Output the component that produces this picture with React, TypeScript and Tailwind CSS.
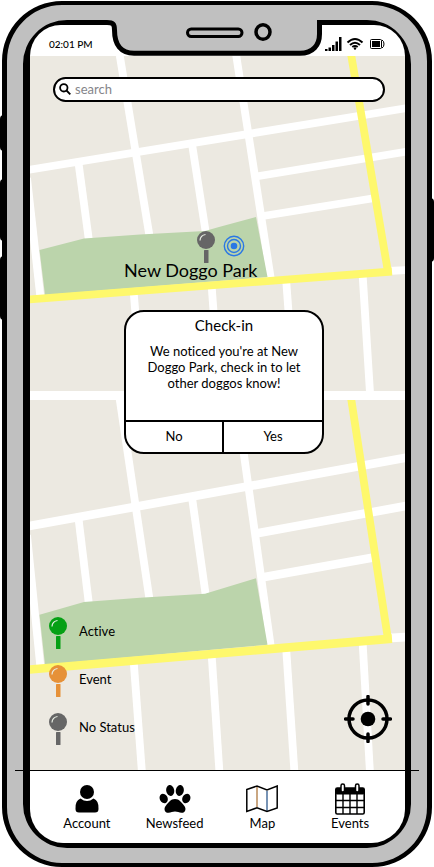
import { useId } from "react";

function MapTile({ className }: { className: string }) {
  return (
    <svg
      className={`block min-h-0 w-full ${className}`}
      viewBox="30 56 375 335"
      preserveAspectRatio="none"
      aria-hidden="true"
    >
      <rect x="30" y="56" width="375" height="335" fill="#ece9e1" />
      <g className="fill-none stroke-white" strokeWidth="7.8">
        <path d="M28 170 L407 108" />
        <path d="M119.5 54 L149.5 236" />
        <path d="M78.5 163 L89 241" />
        <path d="M192 144 L206 234" />
        <path d="M27 178 L40.500 298" />
        <path d="M236 54 L271 280" />
        <path d="M256 176.500 L407 151.500" />
        <path d="M263 216 L372 198.500" />
        <path d="M388 271 L407 270" />
        <path d="M133.500 290 L142 393" />
        <path d="M211.500 284 L219.500 393" />
        <path d="M286 278 L294.500 393" />
        <path d="M362.500 273 L370 393" />
      </g>
      <path
        d="M39.500 250 L84 238.500 L140 234.500 L205 231 L219 227 L256 217 L267.500 277 L45 295 Z"
        fill="#bbd4ab"
      />
      <path
        d="M351 54 L388 272 M28 299.500 L392 271.500"
        fill="none"
        stroke="#fef86c"
        strokeWidth="7.800"
      />
    </svg>
  );
}

function Pin({ color }: { color: string }) {
  return (
    <svg className="block h-8 w-5 shrink-0" viewBox="0 0 20 32" aria-hidden="true">
      <circle cx="10" cy="9" r="9" fill={color} />
      <rect x="8" y="19" width="4.500" height="13" rx="0.500" fill={color} />
      <path d="M4 9.500 A6 6 0 0 1 9.500 3.500" fill="none" stroke="#e8eee4" strokeWidth="1.200" />
    </svg>
  );
}

function StatusBar() {
  return (
    <header className="flex h-[31px] items-end justify-between rounded-t-[38px] bg-white pr-5 pb-1 pl-[19px]">
      <time className="text-[10px] leading-4 font-medium">02:01 PM</time>
      <svg className="h-4 w-[62px]" viewBox="323 37 62 16" aria-label="Signal, wifi and battery">
        <g fill="#000">
          <rect x="325" y="50" width="2.500" height="2" />
          <rect x="328.500" y="48.500" width="2.500" height="3.500" />
          <rect x="332" y="46" width="2.500" height="6" />
          <rect x="335.500" y="42.500" width="2.500" height="9.500" />
          <rect x="339" y="38" width="2.500" height="14" />
        </g>
        <g fill="none" stroke="#000" strokeWidth="2">
          <path d="M347.500 43.500 Q355 36.500 362.500 43.500" />
          <path d="M350 46 Q355 41.500 360 46" />
          <path d="M352.300 48 Q355 46 357.700 48" />
        </g>
        <circle cx="355" cy="49.500" r="1.200" />
        <rect x="370.500" y="40.500" width="11" height="9" rx="1" fill="none" stroke="#000" />
        <rect x="372" y="42" width="8" height="6" />
        <path d="M382 41 Q384 42 384 45 Q384 48 382 49" fill="none" stroke="#000" />
      </svg>
    </header>
  );
}

function SearchBox() {
  const id = useId();
  return (
    <div className="mt-[21px] mr-5 ml-[23px] flex h-[25px] items-center gap-1 rounded-full border-2 border-black bg-white pr-3 pb-px pl-1">
      <label htmlFor={id} aria-label="Search">
        <svg className="block h-3 w-3" viewBox="0 0 12 12" fill="none" stroke="#000" strokeWidth="1.800">
          <circle cx="4.800" cy="4.800" r="3.700" />
          <path d="M7.500 7.500 L11.300 11.300" />
        </svg>
      </label>
      <input
        id={id}
        type="search"
        placeholder="search"
        className="min-w-0 flex-1 bg-transparent text-[13px] leading-4 outline-none placeholder:text-[#85858a]"
      />
    </div>
  );
}

function CheckInDialog() {
  return (
    <section
      role="dialog"
      aria-labelledby="checkin-title"
      className="absolute top-[254px] left-[94px] flex h-[144px] w-[200px] flex-col overflow-hidden rounded-[20px] border-2 border-black bg-white text-center"
    >
      <h2 id="checkin-title" className="pt-[3px] text-[15px] leading-5">
        Check-in
      </h2>
      <p className="mt-2 px-4 text-[13px] leading-4">
        We noticed you're at New Doggo Park, check in to let other doggos know!
      </p>
      <div className="mt-auto grid h-8 grid-cols-2 divide-x-2 divide-black border-t-2 border-black text-[13px]">
        <button type="button">No</button>
        <button type="button">Yes</button>
      </div>
    </section>
  );
}

const legend = [
  { label: "Active", color: "#05a014" },
  { label: "Event", color: "#e69138" },
  { label: "No Status", color: "#666666" },
];

function Legend() {
  return (
    <ul className="flex flex-col gap-4">
      {legend.map((item) => (
        <li key={item.label} className="flex items-center gap-[11px]">
          <Pin color={item.color} />
          <span className="pb-1 text-[13px] leading-4">{item.label}</span>
        </li>
      ))}
    </ul>
  );
}

function LocateButton() {
  return (
    <button type="button" aria-label="Locate me" className="mb-7 h-12 w-12">
      <svg viewBox="0 0 48 48" className="block h-12 w-12" fill="none" stroke="#000">
        <circle cx="24" cy="24" r="19" strokeWidth="3.500" />
        <circle cx="24" cy="24" r="7.300" fill="#000" stroke="none" />
        <path
          d="M24 1.500 V9 M24 39 V46.500 M1.500 24 H9 M39 24 H46.500"
          strokeWidth="3.500"
          strokeLinecap="round"
        />
      </svg>
    </button>
  );
}

function MapView() {
  return (
    <main className="relative flex flex-1 flex-col">
      <div className="absolute inset-0 flex flex-col gap-[9px] bg-white">
        <MapTile className="h-0 flex-[335]" />
        <MapTile className="h-0 flex-[371]" />
      </div>
      <div className="relative flex flex-1 flex-col">
        <SearchBox />
        <div className="absolute top-[175px] left-[166px]">
          <Pin color="#666666" />
        </div>
        <svg className="absolute top-[179px] left-[193px] h-[22px] w-[22px]" viewBox="0 0 22 22" fill="none" stroke="#2b78e4">
          <circle cx="11" cy="11" r="9.700" strokeWidth="1.400" />
          <circle cx="11" cy="11" r="6.500" strokeWidth="1.400" />
          <circle cx="11" cy="11" r="3.300" fill="#2b78e4" stroke="none" />
        </svg>
        <p className="absolute top-[202px] left-[94px] text-[18px] leading-6 whitespace-nowrap">New Doggo Park</p>
        <CheckInDialog />
        <div className="mt-auto flex items-end justify-between pr-[13px] pl-[18px]">
          <div className="pb-[26px]">
            <Legend />
          </div>
          <LocateButton />
        </div>
      </div>
    </main>
  );
}

function AccountIcon() {
  return (
    <svg className="h-7 w-8" viewBox="0 0 32 28" aria-hidden="true">
      <path d="M4.500 24 Q4 15.500 9.500 13.500 Q16 18.500 22.500 13.500 Q28 15.500 27.500 24 Q27.500 27.500 24 27.500 H8 Q4.500 27.500 4.500 24 Z" />
      <circle cx="16" cy="7" r="7" />
    </svg>
  );
}

function PawIcon() {
  return (
    <svg className="h-7 w-8" viewBox="0 0 32 28" aria-hidden="true">
      <ellipse cx="11.200" cy="5.500" rx="4" ry="5.500" transform="rotate(-10 11.200 5.500)" />
      <ellipse cx="20.800" cy="5.500" rx="4" ry="5.500" transform="rotate(10 20.800 5.500)" />
      <ellipse cx="4.700" cy="13.500" rx="3.900" ry="5" transform="rotate(-25 4.700 13.500)" />
      <ellipse cx="27.300" cy="13.500" rx="3.900" ry="5" transform="rotate(25 27.300 13.500)" />
      <path d="M16 14 C20.500 14 22.500 17.500 25 20.500 C28 24 26 28 22.500 27.800 C20 27.700 18.500 26.500 16 26.500 C13.500 26.500 12 27.700 9.500 27.800 C6 28 4 24 7 20.500 C9.500 17.500 11.500 14 16 14 Z" />
    </svg>
  );
}

function MapIcon() {
  return (
    <svg className="h-7 w-8" viewBox="0 0 32 28" fill="none" stroke="#000" strokeWidth="1.500" aria-hidden="true">
      <path d="M11 2 V22" stroke="#b98a58" />
      <path d="M21 6 V26" stroke="#4a6f9c" />
      <path d="M0.800 4.500 L11 1 L21 5 L31.200 1 V23 L21 26.500 L11 22.800 L0.800 26.500 Z" />
    </svg>
  );
}

function CalendarIcon() {
  return (
    <svg className="h-8 w-[30px]" viewBox="0 0 30 32" aria-hidden="true">
      <rect x="0.800" y="5" width="28.400" height="26" rx="1.500" fill="#fff" stroke="#000" strokeWidth="1.600" />
      <rect x="0.800" y="5" width="28.400" height="6.500" rx="1.500" />
      <path d="M1 17.500 H29 M1 24.500 H29 M8 11 V31 M15 11 V31 M22 11 V31" fill="none" stroke="#000" strokeWidth="1.400" />
      <rect x="6" y="1" width="3.500" height="8" rx="1.700" fill="#fff" stroke="#000" strokeWidth="1.500" />
      <rect x="20.500" y="1" width="3.500" height="8" rx="1.700" fill="#fff" stroke="#000" strokeWidth="1.500" />
    </svg>
  );
}

const tabs = [
  { label: "Account", Icon: AccountIcon },
  { label: "Newsfeed", Icon: PawIcon },
  { label: "Map", Icon: MapIcon },
  { label: "Events", Icon: CalendarIcon },
];

function TabBar() {
  return (
    <nav className="relative grid h-[72px] grid-cols-4 rounded-b-[34px] bg-white pr-[11px] pl-[13px] before:absolute before:-top-px before:-right-[14px] before:-left-[15px] before:h-px before:bg-black">
      {tabs.map(({ label, Icon }) => (
        <a key={label} href={`#${label.toLowerCase()}`} className="flex flex-col items-center pt-3 text-[13px] leading-4">
          <span className="flex h-8 items-center">
            <Icon />
          </span>
          {label}
        </a>
      ))}
    </nav>
  );
}

function Notch() {
  return (
    <svg
      className="absolute top-[10px] left-1/2 h-12 w-[220px] -translate-x-1/2"
      viewBox="107 15 220 48"
      aria-hidden="true"
    >
      <path
        d="M107 22.500 C113 22.500 114.500 24 114.500 30 C114.500 45 121 53.300 134 53.300 H300 C313 53.300 319.500 45 319.500 34 V22.500 H327 V20 H320 V18 H112 V20 H107 Z"
        fill="#c0c0c0"
      />
      <path
        d="M107 22.500 C113 22.500 114.500 24 114.500 30 C114.500 45 121 53.300 134 53.300 H300 C313 53.300 319.500 45 319.500 34 V22.500 H327"
        fill="none"
        stroke="#000"
        strokeWidth="5"
      />
      <rect x="187.500" y="29" width="54.500" height="7.500" rx="3.700" fill="none" stroke="#000" strokeWidth="3" />
      <ellipse cx="263" cy="32" rx="7" ry="7.300" fill="none" stroke="#000" strokeWidth="3.500" />
    </svg>
  );
}

export default function App() {
  return (
    <div className="relative flex min-h-screen flex-col bg-white px-[2px] pt-px font-['Lato','Open_Sans',sans-serif] text-black [font-variant-ligatures:none]">
      <span className="absolute top-[115px] left-0 h-9 w-1 rounded-l bg-black" />
      <span className="absolute top-[179px] left-0 h-[62px] w-1 rounded-l bg-black" />
      <span className="absolute top-[256px] left-0 h-[64px] w-1 rounded-l bg-black" />
      <span className="absolute top-[198px] right-0 h-[64px] w-1 rounded-r bg-black" />
      <div className="relative flex flex-1 flex-col rounded-[60px] border-x-[5px] border-y-4 border-black bg-[#c0c0c0] px-4 py-[15px]">
        <div className="flex flex-1 flex-col rounded-[44px] border-y-[5px] border-r-[6px] border-l-[7px] border-black bg-white">
          <StatusBar />
          <MapView />
          <TabBar />
        </div>
        <Notch />
      </div>
    </div>
  );
}
